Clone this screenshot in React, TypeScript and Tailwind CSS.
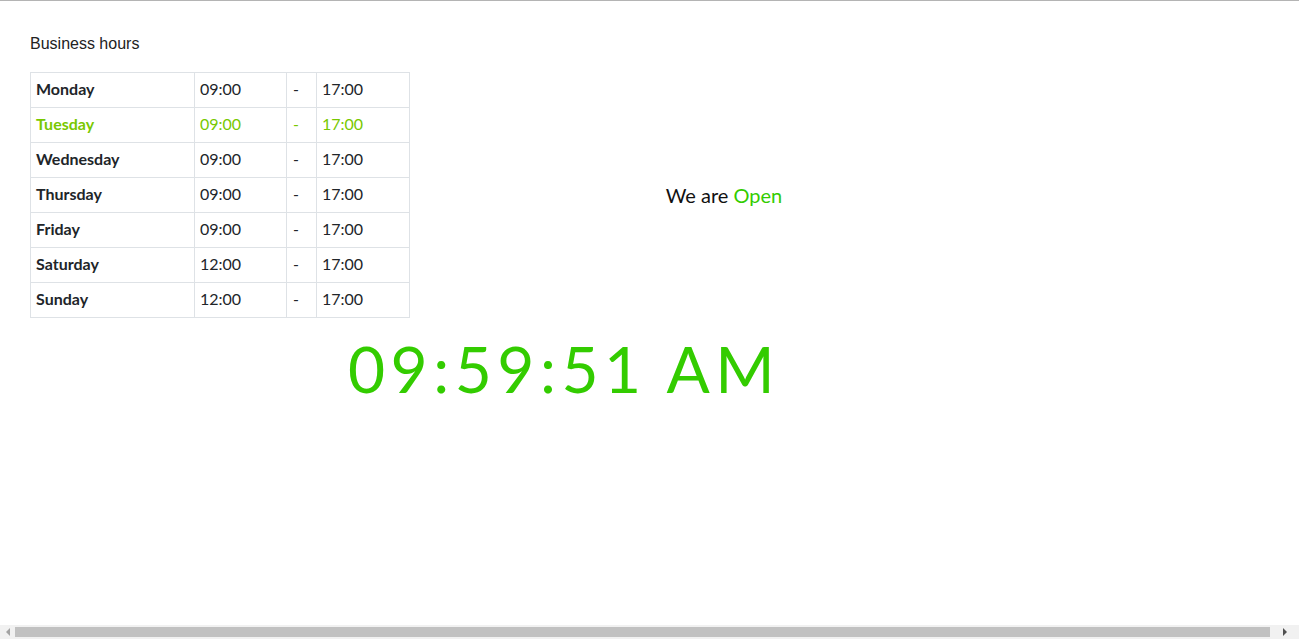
import React from "react";

type Day = { name: string; open: string; close: string; today?: boolean };

const days: Day[] = [
  { name: "Monday", open: "09:00", close: "17:00" },
  { name: "Tuesday", open: "09:00", close: "17:00", today: true },
  { name: "Wednesday", open: "09:00", close: "17:00" },
  { name: "Thursday", open: "09:00", close: "17:00" },
  { name: "Friday", open: "09:00", close: "17:00" },
  { name: "Saturday", open: "12:00", close: "17:00" },
  { name: "Sunday", open: "12:00", close: "17:00" },
];

const cell = "border border-[#dee2e6] px-[5px] pt-[4px] pb-[6px] leading-6 text-[16px]";

export default function App() {
  return (
    <div className="h-[639px] flex flex-col bg-white border-t border-[#b4b4b4] text-[#212529] font-['Lato','Open_Sans',sans-serif]">
      <div className="flex-1 pl-[30px] pt-[33px]">
        <h2 className="font-['Liberation_Sans',Arial,sans-serif] text-[16px] leading-5 text-[#222]">
          Business hours
        </h2>

        <div className="flex mt-[18px]">
          <table className="border-collapse w-[380px]">
            <tbody>
              {days.map((d) => (
                <tr key={d.name} className={d.today ? "text-[#78c800]" : ""}>
                  <td className={`${cell} w-[164px] font-bold`}>{d.name}</td>
                  <td className={`${cell} w-[92px]`}>{d.open}</td>
                  <td className={`${cell} w-[30px] pl-[6px]`}>-</td>
                  <td className={`${cell}`}>{d.close}</td>
                </tr>
              ))}
            </tbody>
          </table>

          {/* status */}
          <div className="flex items-center justify-center w-[628px]">
            <p className="text-[20px] text-[#111]">
              We are <span className="text-[#33cc00]">Open</span>
            </p>
          </div>
        </div>

        <div className="pl-[318px] pt-[15px]">
          <div className="text-[64px] leading-[72px] tracking-[5.5px] text-[#33cc00] font-['Lato',sans-serif]">
            09:59:51 AM
          </div>
        </div>
      </div>

      {/* horizontal scrollbar */}
      <div className="h-[14px] bg-[#f1f1f1] flex items-center">
        <div className="w-[15px] flex justify-center">
          <svg width="6" height="8" viewBox="0 0 6 8">
            <path d="M5 0 L1 4 L5 8 Z" fill="#a3a3a3" />
          </svg>
        </div>
        <div className="w-[1255px] h-[10px] bg-[#c1c1c1]" />
        <div className="flex-1 flex justify-center">
          <svg width="6" height="8" viewBox="0 0 6 8">
            <path d="M1 0 L5 4 L1 8 Z" fill="#505050" />
          </svg>
        </div>
      </div>
    </div>
  );
}
